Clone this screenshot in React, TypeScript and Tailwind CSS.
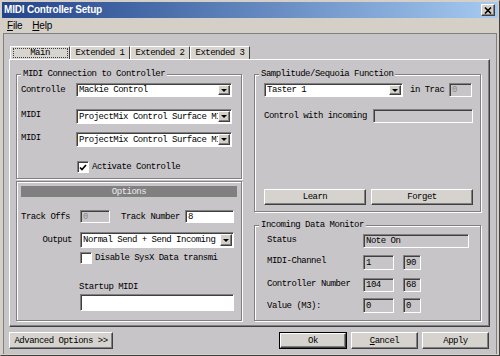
import React from "react";

const raised =
  "border border-t-white border-l-white border-r-[#404040] border-b-[#404040] shadow-[inset_-1px_-1px_0_#808080]";
const sunken =
  "border border-t-[#808080] border-l-[#808080] border-r-white border-b-white shadow-[inset_1px_1px_0_#404040]";

function Group({
  title,
  className,
  children,
}: {
  title?: string;
  className: string;
  children: React.ReactNode;
}) {
  return (
    <div
      className={`relative border border-[#808080] shadow-[inset_1px_1px_0_#fff,1px_1px_0_#fff] ${className}`}
    >
      {title && (
        <span className="absolute -top-[5px] left-[4px] bg-[#c8c5c8] px-[2px] leading-[9px] whitespace-nowrap">
          {title}
        </span>
      )}
      {children}
    </div>
  );
}

function Select({ value, className }: { value: string; className: string }) {
  return (
    <div className={`flex bg-white ${sunken} ${className}`}>
      <div className="flex-1 overflow-hidden whitespace-nowrap pl-[2px] flex items-center">
        {value}
      </div>
      <div
        className={`w-[12px] my-[1px] mr-[1px] bg-[#d4d0c8] flex items-center justify-center ${raised}`}
      >
        <svg width="6" height="3" viewBox="0 0 6 3">
          <path d="M0 0h6L3 3z" fill="#000" />
        </svg>
      </div>
    </div>
  );
}

function Field({
  value,
  className,
  white,
  dim,
}: {
  value?: string;
  className: string;
  white?: boolean;
  dim?: boolean;
}) {
  return (
    <div
      className={`flex items-center pl-[2px] whitespace-nowrap overflow-hidden ${
        white ? "bg-white" : "bg-[#c8c5c8]"
      } ${dim ? "text-[#8a8a8a]" : "text-black"} ${sunken} ${className}`}
    >
      {value}
    </div>
  );
}

function Check({ checked }: { checked?: boolean }) {
  return (
    <div className={`w-[12px] h-[12px] bg-white flex items-center justify-center ${sunken}`}>
      {checked && (
        <svg width="8" height="7" viewBox="0 0 8 7">
          <path d="M1 3.5 L3 5.5 L7 1" stroke="#000" strokeWidth="1.6" fill="none" />
        </svg>
      )}
    </div>
  );
}

function Button({
  children,
  className,
}: {
  children: React.ReactNode;
  className: string;
}) {
  return (
    <div
      className={`flex items-center justify-center bg-[#d6d3ce] whitespace-nowrap ${raised} ${className}`}
    >
      {children}
    </div>
  );
}

export default function App() {
  const tabs = ["Main", "Extended 1", "Extended 2", "Extended 3"];

  return (
    <div className="w-[500px] h-[356px] overflow-hidden bg-[#d4d0c8] border border-t-[#d4d0c8] border-l-[#d4d0c8] border-r-[#404040] border-b-[#404040] p-[1px] flex flex-col font-['Liberation_Mono',monospace] text-[9px] leading-[10px] tracking-[-0.5px] text-black">
      {/* Title bar */}
      <div className="h-[16px] flex items-center justify-between bg-linear-to-r from-[#24448a] to-[#a6caf0] font-['Liberation_Sans',Arial,sans-serif] tracking-normal">
        <span className="pl-[2px] text-[10px] font-bold text-white tracking-[-0.2px]">MIDI Controller Setup</span>
        <div className={`w-[14px] h-[12px] mr-[3px] bg-[#d4d0c8] flex items-center justify-center ${raised}`}>
          <svg width="8" height="7" viewBox="0 0 8 7">
            <path d="M1 0.5 L7 6.5 M7 0.5 L1 6.5" stroke="#000" strokeWidth="1.6" />
          </svg>
        </div>
      </div>

      {/* Menu */}
      <div className="h-[15px] flex items-center gap-[10px] pl-[5px] font-['Liberation_Sans',Arial,sans-serif] text-[10px] tracking-[-0.2px]">
        <span>
          <span className="underline">F</span>ile
        </span>
        <span>
          <span className="underline">H</span>elp
        </span>
      </div>

      {/* Body */}
      <div className="flex-1 flex flex-col bg-[#c8c5c8] mx-[1px] border-t border-x border-[#808080]">
        {/* Tabs */}
        <div className="flex mt-[12px] ml-[6px] h-[13px]">
          {tabs.map((t, i) => (
            <div
              key={t}
              className="w-[60px] h-[13px] bg-[#d8d5d0] border-t border-l border-r border-t-white border-l-white border-r-[#404040] flex items-center justify-center"
            >
              {i === 0 ? (
                <span className="border border-dotted border-[#404040] w-[55px] h-[10px] flex items-center justify-center leading-[8px]">
                  {t}
                </span>
              ) : (
                <span className="whitespace-nowrap">{t}</span>
              )}
            </div>
          ))}
        </div>

        {/* Pane */}
        <div className="ml-[5px] w-[481px] h-[268px] border border-t-white border-l-white border-r-[#404040] border-b-[#404040] shadow-[inset_-1px_-1px_0_#808080] flex pt-[14px] pl-[6px] gap-[12px]">
          {/* Left column */}
          <div className="flex flex-col">
            <Group title="MIDI Connection to Controller" className="w-[226px] h-[105px]">
              <div className="flex flex-col pt-[8px] pl-[4px]">
                <div className="flex items-center h-[14px]">
                  <div className="w-[55px] whitespace-nowrap">Controlle</div>
                  <Select value="Mackie Control" className="w-[156px] h-[14px]" />
                </div>
                <div className="flex mt-[12px] h-[15px]">
                  <div className="w-[55px] pt-[1px]">MIDI</div>
                  <Select value="ProjectMix Control Surface MIDI In" className="w-[156px] h-[15px]" />
                </div>
                <div className="flex mt-[8px] h-[15px]">
                  <div className="w-[55px] pt-[1px]">MIDI</div>
                  <Select value="ProjectMix Control Surface MIDI Out" className="w-[156px] h-[15px]" />
                </div>
                <div className="flex items-center mt-[14px] ml-[56px]">
                  <Check checked />
                  <div className="ml-[3px] whitespace-nowrap">Activate Controlle</div>
                </div>
              </div>
            </Group>

            <Group className="w-[226px] h-[140px] mt-[2px]">
              <div className="flex flex-col pt-[4px] pl-[4px]">
                <div className="w-[216px] h-[11px] bg-[#808080] text-[#ececec] flex items-center justify-center">
                  Options
                </div>
                <div className="flex items-center mt-[13px] h-[13px]">
                  <div className="w-[59px] whitespace-nowrap">Track Offs</div>
                  <Field value="0" dim className="w-[30px] h-[13px]" />
                  <div className="ml-[11px] w-[64px] whitespace-nowrap">Track Number</div>
                  <Field value="8" white className="w-[49px] h-[13px]" />
                </div>
                <div className="flex items-center mt-[9px] h-[16px]">
                  <div className="w-[59px] text-right pr-[8px]">Output</div>
                  <Select value="Normal Send + Send Incoming" className="w-[154px] h-[16px]" />
                </div>
                <div className="flex items-center mt-[4px] ml-[59px]">
                  <Check />
                  <div className="ml-[3px] whitespace-nowrap">Disable SysX Data transmi</div>
                </div>
                <div className="mt-[18px] ml-[58px] whitespace-nowrap">Startup MIDI</div>
                <Field white className="mt-[2px] ml-[59px] w-[154px] h-[17px]" />
              </div>
            </Group>
          </div>

          {/* Right column */}
          <div className="flex flex-col">
            <Group title="Samplitude/Sequoia Function" className="w-[227px] h-[138px]">
              <div className="flex flex-col pt-[8px] pl-[9px]">
                <div className="flex items-center h-[14px]">
                  <Select value="Taster 1" className="w-[139px] h-[14px]" />
                  <div className="ml-[7px] w-[39px] whitespace-nowrap">in Trac</div>
                  <Field value="0" dim className="w-[23px] h-[14px]" />
                </div>
                <div className="flex items-center mt-[12px] h-[14px]">
                  <div className="w-[109px] whitespace-nowrap">Control with incoming</div>
                  <Field className="w-[100px] h-[14px]" />
                </div>
                <div className="flex mt-[66px] h-[16px]">
                  <Button className="w-[102px] h-[16px]">Learn</Button>
                  <Button className="ml-[5px] w-[102px] h-[16px]">Forget</Button>
                </div>
              </div>
            </Group>

            <Group title="Incoming Data Monitor" className="w-[227px] h-[96px] mt-[13px]">
              <div className="flex flex-col pt-[8px] pl-[12px]">
                <div className="flex h-[14px]">
                  <div className="w-[96px] pt-[1px]">Status</div>
                  <Field value="Note On" className="w-[106px] h-[14px]" />
                </div>
                <div className="flex mt-[7px] h-[15px]">
                  <div className="w-[96px] pt-[1px] whitespace-nowrap">MIDI-Channel</div>
                  <Field value="1" className="w-[31px] h-[15px]" />
                  <Field value="90" className="ml-[9px] w-[18px] h-[15px]" />
                </div>
                <div className="flex mt-[8px] h-[14px]">
                  <div className="w-[96px] pt-[1px] whitespace-nowrap">Controller Number</div>
                  <Field value="104" className="w-[31px] h-[14px]" />
                  <Field value="68" className="ml-[9px] w-[18px] h-[14px]" />
                </div>
                <div className="flex items-center mt-[6px] h-[15px]">
                  <div className="w-[96px] whitespace-nowrap">Value (M3):</div>
                  <Field value="0" className="w-[31px] h-[15px]" />
                  <Field value="0" className="ml-[9px] w-[18px] h-[15px]" />
                </div>
              </div>
            </Group>
          </div>
        </div>

        {/* Bottom buttons */}
        <div className="flex mt-[5px] h-[17px] pl-[5px] pr-[7px]">
          <Button className="w-[104px] h-[17px]">Advanced Options &gt;&gt;</Button>
          <div className="flex-1" />
          <div className="w-[68px] h-[17px] border border-black flex">
            <Button className="flex-1">Ok</Button>
          </div>
          <Button className="ml-[4px] w-[67px] h-[17px]">
            <span className="underline">C</span>ancel
          </Button>
          <Button className="ml-[4px] w-[67px] h-[17px]">Apply</Button>
        </div>
      </div>
    </div>
  );
}
